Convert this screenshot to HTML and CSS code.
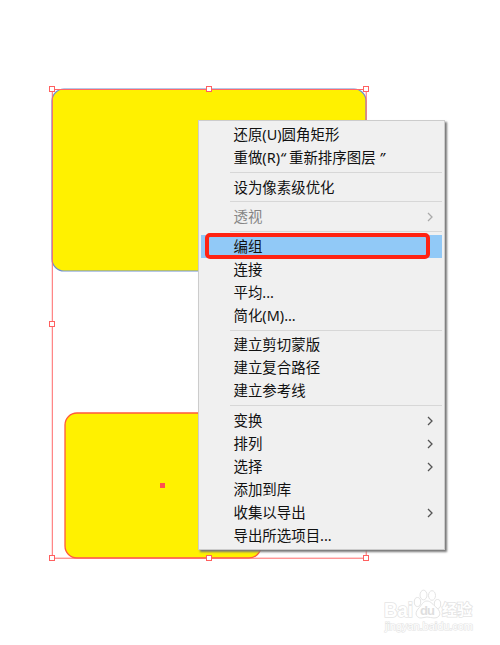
FILE: index.html
```
<!DOCTYPE html>
<html lang="zh-CN">
<head>
    <meta charset="utf-8">
    <title>编组</title>
    <link rel="stylesheet" href="styles.css">
</head>
<body>
    <div class="canvas">
        <svg class="artboard" width="500" height="645" viewBox="0 0 500 645">
            <rect class="shape shape-back" x="52" y="89" width="314" height="182" rx="12"/>
            <rect class="shape shape-front" x="65" y="413" width="196" height="145" rx="12"/>
            <rect class="bounds" x="52.3" y="89.5" width="313.9" height="468.7"/>
            <rect class="center" x="160" y="483" width="5" height="5"/>
            <g class="handles">
                <rect x="49.5" y="86.5" width="5" height="5"/>
                <rect x="206.5" y="86.5" width="5" height="5"/>
                <rect x="363.5" y="86.5" width="5" height="5"/>
                <rect x="49.5" y="321.5" width="5" height="5"/>
                <rect x="49.5" y="555.5" width="5" height="5"/>
                <rect x="206.5" y="555.5" width="5" height="5"/>
                <rect x="363.5" y="555.5" width="5" height="5"/>
            </g>
        </svg>

        <ul class="menu">
            <li class="item">还原(U)圆角矩形</li>
            <li class="item">重做(R)<i>“</i> 重新排序图层 <i>”</i></li>
            <li class="line"></li>
            <li class="item">设为像素级优化</li>
            <li class="line"></li>
            <li class="item disabled">透视<svg class="arrow" viewBox="0 0 6 10"><path d="M1 1l4 4-4 4"/></svg></li>
            <li class="line"></li>
            <li class="item active">编组<span class="mark"></span></li>
            <li class="item">连接</li>
            <li class="item">平均...</li>
            <li class="item">简化(M)...</li>
            <li class="line"></li>
            <li class="item">建立剪切蒙版</li>
            <li class="item">建立复合路径</li>
            <li class="item">建立参考线</li>
            <li class="line"></li>
            <li class="item">变换<svg class="arrow" viewBox="0 0 6 10"><path d="M1 1l4 4-4 4"/></svg></li>
            <li class="item">排列<svg class="arrow" viewBox="0 0 6 10"><path d="M1 1l4 4-4 4"/></svg></li>
            <li class="item">选择<svg class="arrow" viewBox="0 0 6 10"><path d="M1 1l4 4-4 4"/></svg></li>
            <li class="item">添加到库</li>
            <li class="item">收集以导出<svg class="arrow" viewBox="0 0 6 10"><path d="M1 1l4 4-4 4"/></svg></li>
            <li class="item">导出所选项目...</li>
        </ul>

        <svg class="watermark" width="100" height="50" viewBox="0 0 100 50">
            <text class="logo" x="3" y="30" textLength="29" lengthAdjust="spacingAndGlyphs">Bai</text>
            <ellipse cx="36.5" cy="15" rx="3.2" ry="4.5"/>
            <ellipse cx="42.5" cy="8" rx="3.5" ry="4.8"/>
            <ellipse cx="51" cy="8.5" rx="3.5" ry="4.8"/>
            <ellipse cx="56.5" cy="17" rx="3.2" ry="4.5"/>
            <path d="M46 14c-4 0-5 4-9 8-4 5-1 9 3 9 2 0 4-1 6-1s5 1 7 1c6 0 8-5 3-10-4-3-6-7-10-7z"/>
            <text class="du" x="39" y="28" textLength="15">du</text>
            <text class="name" x="61" y="28" textLength="30">经验</text>
            <text class="site" x="4" y="43" textLength="88">jingyan.baidu.com</text>
        </svg>
    </div>
</body>
</html>
```

FILE: styles.css
```
body {
    margin: 0;
    background-color: #fff;
    font-family: "Noto Sans", "Noto Sans CJK SC", sans-serif;
    overflow: hidden;
}

.canvas {
    position: relative;
    width: 500px;
    height: 645px;
}

.artboard {
    display: block;
}

.shape {
    fill: #fff100;
}

.shape-back {
    stroke: #6f8fd0;
    stroke-width: 1.2;
}

.shape-front {
    stroke: #ff5a3c;
    stroke-width: 1.3;
}

.bounds {
    fill: none;
    stroke: #ff6868;
}

.center {
    fill: #ff5050;
}

.handles rect {
    fill: #fff;
    stroke: #ff6060;
}

.menu {
    position: absolute;
    left: 198px;
    top: 120px;
    box-sizing: border-box;
    width: 247px;
    height: 430px;
    margin: 0;
    padding: 2px 2px 0;
    list-style: none;
    background-color: #f0f0f0;
    border: 1px solid #ccc;
    box-shadow: 2px 2px 2px #777;
}

.item {
    position: relative;
    display: flex;
    align-items: center;
    height: 23.06px;
    padding: 0 9px 0 32.5px;
    font-size: 14.45px;
    line-height: 23px;
    color: #111;
    white-space: pre;
}

.line {
    height: 1px;
    margin: 2.75px 0 2.75px 29px;
    background-color: #d7d7d7;
}

.disabled {
    color: #858585;
}

.active {
    background-color: #91c9f7;
}

.arrow {
    width: 6px;
    height: 10px;
    margin-left: auto;
    fill: none;
    stroke: #555;
    stroke-width: 1.3;
}

.disabled .arrow {
    stroke: #aaa;
}

/* red frame round the chosen command */
.mark {
    position: absolute;
    left: 4px;
    top: -2px;
    right: 12px;
    bottom: -1px;
    border: 4px solid #ff2312;
    border-radius: 5px;
}

.watermark {
    position: absolute;
    left: 381px;
    top: 587px;
    fill: #fff;
    stroke: #e4e4e4;
    stroke-width: 1;
}

.watermark text {
    paint-order: stroke;
    stroke-width: 1.6;
}

.logo {
    font: bold 20px "Liberation Sans", sans-serif;
}

.watermark .du {
    font: bold 13px "Liberation Sans", sans-serif;
    fill: #dedede;
    stroke: none;
}

.name {
    font: bold 15px "Noto Sans CJK SC", sans-serif;
}

.watermark .site {
    font: 11px "Liberation Sans", sans-serif;
    stroke-width: 1.2;
    stroke: #e4e4e4;
}
```
